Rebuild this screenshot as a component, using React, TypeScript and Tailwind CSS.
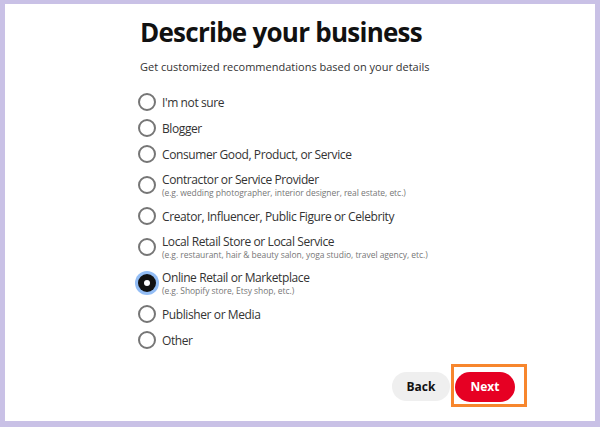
import React from "react";

type Opt = { label: string; sub?: string; selected?: boolean };

const options: Opt[] = [
  { label: "I'm not sure" },
  { label: "Blogger" },
  { label: "Consumer Good, Product, or Service" },
  { label: "Contractor or Service Provider", sub: "(e.g. wedding photographer, interior designer, real estate, etc.)" },
  { label: "Creator, Influencer, Public Figure or Celebrity" },
  { label: "Local Retail Store or Local Service", sub: "(e.g. restaurant, hair & beauty salon, yoga studio, travel agency, etc.)" },
  { label: "Online Retail or Marketplace", sub: "(e.g. Shopify store, Etsy shop, etc.)", selected: true },
  { label: "Publisher or Media" },
  { label: "Other" },
];

function Radio({ selected }: { selected?: boolean }) {
  if (selected) {
    return (
      <div className="w-[18px] h-[18px] shrink-0 rounded-full bg-[#111] flex items-center justify-center shadow-[0_0_0_3px_#93bdf5]">
        <div className="w-[6px] h-[6px] rounded-full bg-white" />
      </div>
    );
  }
  return <div className="w-[18px] h-[18px] shrink-0 rounded-full border-2 border-[#767676] bg-white" />;
}

export default function App() {
  return (
    <div
      className="w-[600px] h-[427px] bg-[#c9c1e6] pt-[4px] pl-[5px] pr-[5px] pb-[6px]"
      style={{ fontFamily: '"Open Sans", "Noto Sans", sans-serif' }}
    >
      <div className="w-full h-full bg-white pl-[135px]">
        <div className="w-[375px] flex flex-col">
          <h1 className="text-[26px] leading-[34px] font-bold text-[#111] mt-[11px] tracking-[-0.75px]">
            Describe your business
          </h1>
          <p className="text-[11px] leading-[16px] text-[#333] mt-[10px]">
            Get customized recommendations based on your details
          </p>
          <div className="flex flex-col mt-[14px]">
            {options.map((o) => (
              <div
                key={o.label}
                className={`flex items-center gap-[4px] ${o.sub ? "h-[36px]" : "h-[26px]"}`}
              >
                <div className="w-[18px] ml-[-2px] mr-[2px] flex justify-center">
                  <Radio selected={o.selected} />
                </div>
                <div className="flex flex-col">
                  <span className="text-[12px] leading-[15px] text-[#333] tracking-[-0.4px]">{o.label}</span>
                  {o.sub && (
                    <span className="text-[8.5px] leading-[11px] text-[#777] tracking-[-0.05px]">{o.sub}</span>
                  )}
                </div>
              </div>
            ))}
          </div>
          <div className="flex justify-end gap-[5px] mt-[19px]">
            <button className="w-[58px] h-[29px] rounded-full bg-[#efefef] text-[12px] font-bold text-[#111]">
              Back
            </button>
            <div className="relative">
              <button className="w-[60px] h-[30px] rounded-full bg-[#e60023] text-[12px] font-bold text-white">
                Next
              </button>
              <div className="absolute left-[-4px] top-[-8px] w-[76px] h-[43px] border-[3px] border-[#f7862d]" />
            </div>
          </div>
        </div>
      </div>
    </div>
  );
}
